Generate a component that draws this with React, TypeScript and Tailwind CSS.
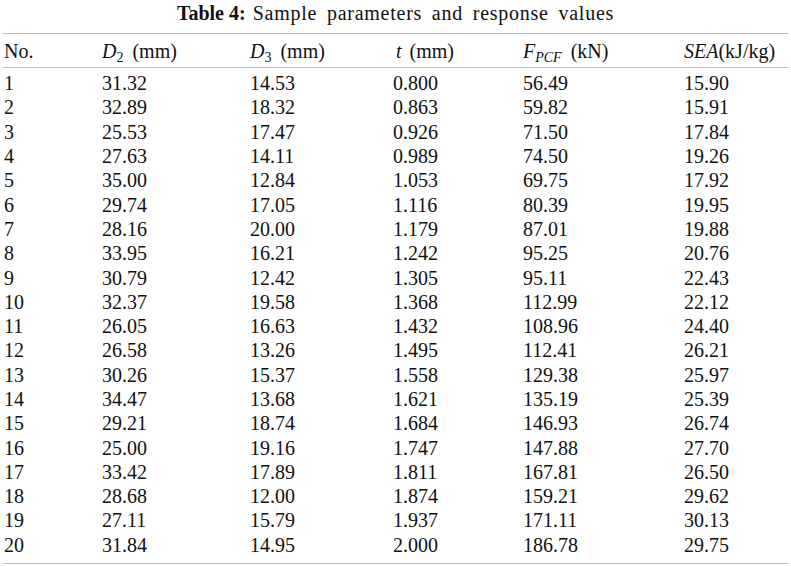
import React from "react";

const rows: string[][] = [
  ["1", "31.32", "14.53", "0.800", "56.49", "15.90"],
  ["2", "32.89", "18.32", "0.863", "59.82", "15.91"],
  ["3", "25.53", "17.47", "0.926", "71.50", "17.84"],
  ["4", "27.63", "14.11", "0.989", "74.50", "19.26"],
  ["5", "35.00", "12.84", "1.053", "69.75", "17.92"],
  ["6", "29.74", "17.05", "1.116", "80.39", "19.95"],
  ["7", "28.16", "20.00", "1.179", "87.01", "19.88"],
  ["8", "33.95", "16.21", "1.242", "95.25", "20.76"],
  ["9", "30.79", "12.42", "1.305", "95.11", "22.43"],
  ["10", "32.37", "19.58", "1.368", "112.99", "22.12"],
  ["11", "26.05", "16.63", "1.432", "108.96", "24.40"],
  ["12", "26.58", "13.26", "1.495", "112.41", "26.21"],
  ["13", "30.26", "15.37", "1.558", "129.38", "25.97"],
  ["14", "34.47", "13.68", "1.621", "135.19", "25.39"],
  ["15", "29.21", "18.74", "1.684", "146.93", "26.74"],
  ["16", "25.00", "19.16", "1.747", "147.88", "27.70"],
  ["17", "33.42", "17.89", "1.811", "167.81", "26.50"],
  ["18", "28.68", "12.00", "1.874", "159.21", "29.62"],
  ["19", "27.11", "15.79", "1.937", "171.11", "30.13"],
  ["20", "31.84", "14.95", "2.000", "186.78", "29.75"],
];

const grid = "grid grid-cols-[98px_148px_143px_130px_161px_1fr]";

export default function App() {
  return (
    <div
      className="w-[791px] h-[566px] bg-white text-[#111] overflow-hidden"
      style={{ fontFamily: '"Liberation Serif", "Times New Roman", serif' }}
    >
      <div className="h-[33px] flex justify-center pt-[1px] text-[20px] leading-[24px]">
        <span className="font-bold">Table 4:</span>
        <span className="ml-[7px] tracking-[0.75px] [word-spacing:4px]">Sample parameters and response values</span>
      </div>
      <div className="mx-[3px] border-t border-b border-[#bdbdbd] pb-[6px]">
        <div className={`${grid} h-[34px] items-center border-b border-[#bdbdbd] px-[1px] text-[20px]`}>
          <div>No.</div>
          <div>
            <i>D</i>
            <sub className="text-[14px] align-baseline relative top-[4px]">2</sub>
            <span className="ml-[9px]">(mm)</span>
          </div>
          <div>
            <i>D</i>
            <sub className="text-[14px] align-baseline relative top-[4px]">3</sub>
            <span className="ml-[9px]">(mm)</span>
          </div>
          <div className="pl-[3px]">
            <i>t</i>
            <span className="ml-[8px]">(mm)</span>
          </div>
          <div>
            <i>F</i>
            <sub className="text-[14px] align-baseline relative top-[4px] italic">PCF</sub>
            <span className="ml-[9px]">(kN)</span>
          </div>
          <div>
            <i>SEA</i>
            <span>(kJ/kg)</span>
          </div>
        </div>
        <div className="pt-[3px]">
          {rows.map((r) => (
            <div key={r[0]} className={`${grid} h-[24.3px] items-center px-[1px] text-[20px] leading-[24px]`}>
              {r.map((c, i) => (
                <div key={i}>{c}</div>
              ))}
            </div>
          ))}
        </div>
      </div>
    </div>
  );
}
